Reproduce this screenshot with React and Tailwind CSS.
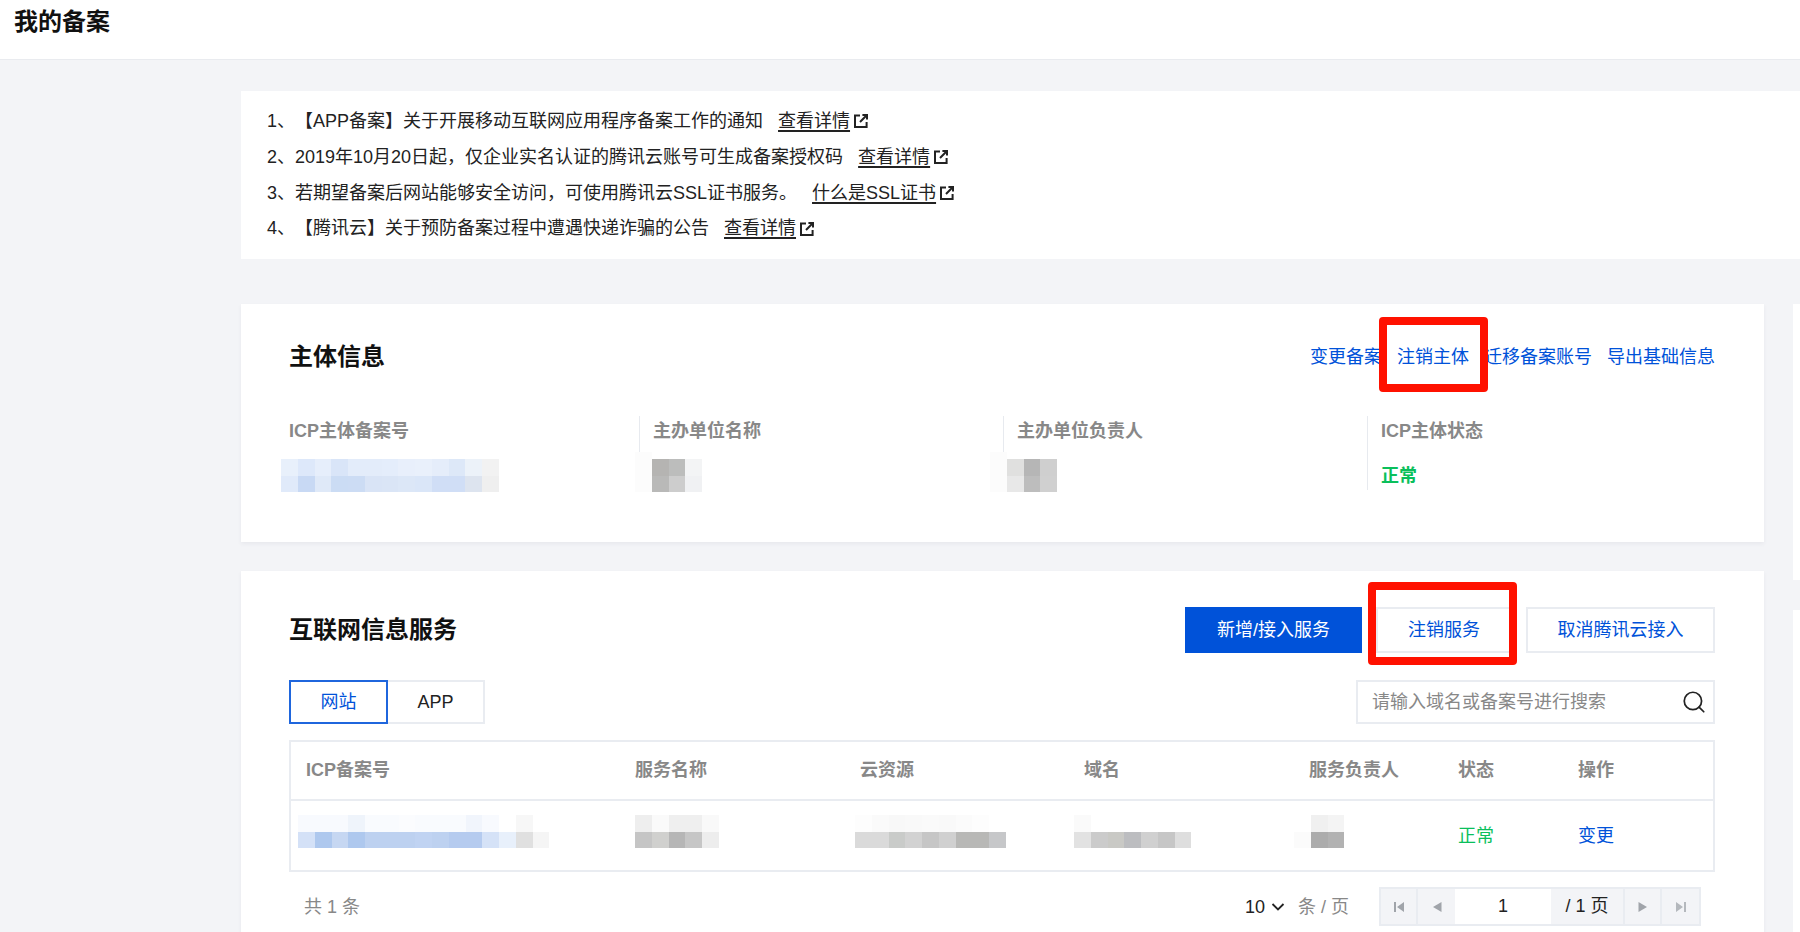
import { Search } from 'lucide-react';

const notices = [
  { text: '1、【APP备案】关于开展移动互联网应用程序备案工作的通知', link: '查看详情' },
  { text: '2、2019年10月20日起，仅企业实名认证的腾讯云账号可生成备案授权码', link: '查看详情' },
  { text: '3、若期望备案后网站能够安全访问，可使用腾讯云SSL证书服务。', link: '什么是SSL证书' },
  { text: '4、【腾讯云】关于预防备案过程中遭遇快递诈骗的公告', link: '查看详情' },
];

// blurred-out values from the screenshot, one colour per block
const icpNo = [
  ['#e8f0fb', '#dde8fa', '#e6eefb', '#d9e5f8', '#e3ecfa', '#e3ecfa', '#e4edfb', '#e8effb', '#e9f0fb', '#e5edfa', '#dde8f8', '#ecf2f9', '#f2f2f2'],
  ['#e0eafa', '#c8d9f4', '#dfe9f8', '#cbdcf4', '#ccdcf4', '#d9e4f6', '#dae5f6', '#dce7f7', '#dae6f8', '#d0def6', '#d0def6', '#dde4ef', '#efefef'],
];
const orgName = [
  ['#fcfcfc', '#b5b4b2', '#bcbdbc', '#f3f4f5'],
  ['#fcfcfc', '#b9b9b8', '#cdcdcd', '#f0f1f3'],
];
const orgOwner = [
  ['#fcfcfc', '#e0e0df', '#b6b6b6', '#cfcfcf'],
  ['#fcfcfc', '#e8e8e8', '#bdbdbd', '#d0d0d0'],
];
const rowIcp = [
  ['#f8fafe', '#f8fafe', '#f8fafe', '#eff4fb', '#f9fbfe', '#f9fbfe', '#fbfcfe', '#f9fbfe', '#f9fbfe', '#f9fbfe', '#f1f5fc', '#f8fafe', '#ffffff', '#f7f7f7', '#ffffff'],
  ['#d4e1f7', '#aec8ee', '#c6d7f2', '#aec8ee', '#bdd1f0', '#bdd1f0', '#bdd1f0', '#c0d3f2', '#bdd1f0', '#b5cbef', '#b5cbef', '#d5e2f7', '#e8f0fb', '#e0e0e0', '#f5f5f5'],
];
const rowName = [
  ['#eeeeee', '#fafafa', '#efefef', '#efefef', '#f9f9f9'],
  ['#c5c5c5', '#d0d0ce', '#b6b6b6', '#c6c6c6', '#ededed'],
];
const rowRes = [
  ['#fdfdfd', '#fafafa', '#f8f8f8', '#f9f9f9', '#fafafa', '#f9f9f9', '#fbfbfb', '#fdfdfd', '#ffffff'],
  ['#dadada', '#dadada', '#c9cbc9', '#d2d2d2', '#c6c6c6', '#d0d0d0', '#b8b8b6', '#b8b8b6', '#c6c7c9'],
];
const rowDomain = [
  ['#fafafa', '#ffffff', '#ffffff', '#ffffff', '#ffffff', '#ffffff', '#ffffff'],
  ['#e2e2e2', '#cbcbcb', '#c9c9c5', '#bcbdc0', '#d0d0d0', '#c6c6c6', '#dedede'],
];
const rowOwner = [
  ['#ffffff', '#f0f0f0', '#f4f4f4'],
  ['#fbfbfb', '#acacac', '#b2b2b2'],
];

function Mosaic({ rows, top = 0, className = '' }) {
  const cw = 16.75;
  const ch = 16.5;
  const width = rows[0].length * cw;
  const height = top + rows.length * ch;
  return (
    <svg width={width} height={height} viewBox={`0 0 ${width} ${height}`} shapeRendering="crispEdges" className={`relative block ${className}`}>
      {top > 0 && <rect x="0" y="0" width={cw} height={top} fill={rows[0][0]} />}
      {rows.map((row, r) =>
        row.map((c, i) => <rect key={`${r}-${i}`} x={i * cw} y={top + r * ch} width={cw} height={ch} fill={c} />)
      )}
    </svg>
  );
}

function ExternalIcon() {
  return (
    <svg width="14" height="14" viewBox="0 0 14 14" fill="none" stroke="#222222" strokeWidth="2" className="inline-block ml-[4px] mb-[2px] align-middle">
      <path d="M6 1.4H1v11.6h11.6V8" />
      <path d="M6 8l6.2-6.2M8.4 1h4.6v4.6" />
    </svg>
  );
}

function PagerIcon({ d, color = '#a0a4aa' }) {
  return (
    <svg width="12" height="12" viewBox="0 0 12 12" fill={color}>
      <path d={d} />
    </svg>
  );
}

function InfoCol({ label, first, children }) {
  return (
    <div className={first ? 'h-[74px]' : 'h-[74px] border-l border-[#e7eaef] pl-[13px]'}>
      <div className="leading-[30px] font-semibold text-[#888888]">{label}</div>
      {children}
    </div>
  );
}

export default function App() {
  return (
    <div className="h-[932px] overflow-hidden bg-[#f3f4f7] text-[18px] text-[#222222] [text-spacing-trim:space-all] font-['Liberation_Sans','Noto_Sans_CJK_SC',sans-serif]">
      <div className="h-[60px] bg-white border-b border-[#e9ebef] pl-[14px] pt-[6px]">
        <h1 className="text-[24px] leading-[32px] font-bold text-[#111111]">我的备案</h1>
      </div>

      <div className="pl-[241px] pt-[31px]">
        <div className="bg-white pl-[26px] pt-[13px] pb-[12px] leading-[35.75px]">
          {notices.map((n) => (
            <div key={n.text}>
              {n.text}
              <a className="ml-[15px] underline decoration-[1.5px] underline-offset-[3px] text-[#222222]">{n.link}</a>
              <ExternalIcon />
            </div>
          ))}
        </div>

        <div className="flex mt-[45px]">
          <div className="w-[1523px] shrink-0">
            <div className="relative h-[238px] bg-white shadow-[0_2px_4px_rgba(54,58,80,0.06)] pl-[48px] pr-[49px] pt-[35px]">
              <div className="flex items-center justify-between h-[36px]">
                <h2 className="text-[24px] font-bold text-[#111111]">主体信息</h2>
                <div className="flex gap-[15px] pt-px text-[#0052d9]">
                  <a>变更备案</a>
                  <a>注销主体</a>
                  <a>迁移备案账号</a>
                  <a>导出基础信息</a>
                </div>
              </div>
              <div className="grid grid-cols-[350px_364px_364px_1fr] mt-[41px]">
                <InfoCol label="ICP主体备案号" first>
                  <Mosaic rows={icpNo} className="-ml-[8px] mt-[13px]" />
                </InfoCol>
                <InfoCol label="主办单位名称">
                  <Mosaic rows={orgName} top={7} className="-ml-[18px] mt-[6px]" />
                </InfoCol>
                <InfoCol label="主办单位负责人">
                  <Mosaic rows={orgOwner} top={7} className="-ml-[27px] mt-[6px]" />
                </InfoCol>
                <InfoCol label="ICP主体状态">
                  <div className="mt-[16px] leading-[28px] font-bold text-[#0abf5b]">正常</div>
                </InfoCol>
              </div>
              <div className="absolute left-[1138px] top-[13px] w-[109px] h-[75px] border-[8px] border-[#ff1100] rounded-[4px]" />
            </div>

            <div className="relative mt-[29px] h-[400px] bg-white shadow-[0_2px_4px_rgba(54,58,80,0.06)] pl-[48px] pr-[49px] pt-[36px]">
              <div className="flex items-center justify-between h-[46px]">
                <h2 className="text-[24px] font-bold text-[#111111]">互联网信息服务</h2>
                <div className="flex gap-[14px]">
                  <button className="h-[46px] w-[177px] pt-px bg-[#0052d9] text-white">新增/接入服务</button>
                  <button className="h-[46px] w-[136px] pt-px bg-white border-2 border-[#e9ecf1] text-[#0052d9]">注销服务</button>
                  <button className="h-[46px] w-[189px] pt-px bg-white border-2 border-[#e9ecf1] text-[#0052d9]">取消腾讯云接入</button>
                </div>
              </div>

              <div className="flex items-center justify-between mt-[27px]">
                <div className="flex h-[44px]">
                  <button className="w-[99px] pt-px border-2 border-[#1f66dd] text-[#0052d9]">网站</button>
                  <button className="w-[97px] pt-px border-2 border-l-0 border-[#e9ecf1]">APP</button>
                </div>
                <div className="flex items-center w-[359px] h-[44px] border-2 border-[#e9ecf1] pl-[14px] pr-[6px]">
                  <input
                    placeholder="请输入域名或备案号进行搜索"
                    className="flex-1 min-w-0 pt-px outline-none placeholder:text-[#888888]"
                  />
                  <Search size={26} strokeWidth={1.6} color="#222222" />
                </div>
              </div>

              <table className="mt-[16px] w-[1426px] table-fixed border-collapse border-2 border-[#e9ecf1]">
                <colgroup>
                  <col className="w-[330px]" />
                  <col className="w-[225px]" />
                  <col className="w-[224px]" />
                  <col className="w-[225px]" />
                  <col className="w-[149px]" />
                  <col className="w-[120px]" />
                  <col />
                </colgroup>
                <thead>
                  <tr className="h-[59px] border-b-2 border-[#e9ecf1] text-left text-[#888888]">
                    <th className="pl-[15px] font-semibold">ICP备案号</th>
                    <th className="pl-[15px] font-semibold">服务名称</th>
                    <th className="pl-[15px] font-semibold">云资源</th>
                    <th className="pl-[15px] font-semibold">域名</th>
                    <th className="pl-[15px] font-semibold">服务负责人</th>
                    <th className="pl-[15px] font-semibold">状态</th>
                    <th className="pl-[15px] font-semibold">操作</th>
                  </tr>
                </thead>
                <tbody>
                  <tr className="h-[71px]">
                    <td className="pl-[15px] align-top pt-[14px]"><Mosaic rows={rowIcp} className="-ml-[8px]" /></td>
                    <td className="pl-[15px] align-top pt-[14px]"><Mosaic rows={rowName} /></td>
                    <td className="pl-[15px] align-top pt-[14px]"><Mosaic rows={rowRes} className="-ml-[5px]" /></td>
                    <td className="pl-[15px] align-top pt-[14px]"><Mosaic rows={rowDomain} className="-ml-[10px]" /></td>
                    <td className="pl-[15px] align-top pt-[14px]"><Mosaic rows={rowOwner} className="-ml-[15px]" /></td>
                    <td className="pl-[15px] pt-[2px] text-[#0abf5b]">正常</td>
                    <td className="pl-[15px] pt-[2px] text-[#0052d9]"><a>变更</a></td>
                  </tr>
                </tbody>
              </table>

              <div className="flex items-center justify-between mt-[15px] pl-[15px] pr-[14px] h-[39px] text-[#888888]">
                <span className="pt-px">共 1 条</span>
                <div className="flex items-center">
                  <span className="pt-px text-[#222222]">10</span>
                  <svg width="14" height="8" viewBox="0 0 14 8" fill="none" stroke="#222222" strokeWidth="1.8" className="ml-[6px] mr-[13px]">
                    <path d="M1.5 1l5.5 5.5L12.5 1" />
                  </svg>
                  <span className="mr-[30px] pt-px">条 / 页</span>
                  <div className="flex h-[39px] border-2 border-[#e9ecf1] bg-[#f3f4f7] text-[#222222]">
                    <div className="flex w-[37px] items-center justify-center border-r-2 border-[#e9ecf1]">
                      <PagerIcon d="M1 1h2v10H1zM11 1v10L4 6z" />
                    </div>
                    <div className="flex w-[37px] items-center justify-center">
                      <PagerIcon d="M10.5 1v10L2 6z" />
                    </div>
                    <div className="flex w-[96px] items-center justify-center bg-white">1</div>
                    <div className="flex w-[74px] items-center justify-center border-r-2 border-[#e9ecf1]">/ 1 页</div>
                    <div className="flex w-[37px] items-center justify-center border-r-2 border-[#e9ecf1]">
                      <PagerIcon d="M1.5 1v10L10 6z" />
                    </div>
                    <div className="flex w-[37px] items-center justify-center">
                      <PagerIcon d="M1 1v10l7-5zM9 1h2v10H9z" color="#b4b8bd" />
                    </div>
                  </div>
                </div>
              </div>

              <div className="absolute left-[1127px] top-[11px] w-[149px] h-[83px] border-[8px] border-[#ff1100] rounded-[4px]" />
            </div>
          </div>

          <div className="flex-1 ml-[29px]">
            <div className="h-[276px] bg-white" />
            <div className="mt-[30px] h-[400px] bg-white" />
          </div>
        </div>
      </div>
    </div>
  );
}
